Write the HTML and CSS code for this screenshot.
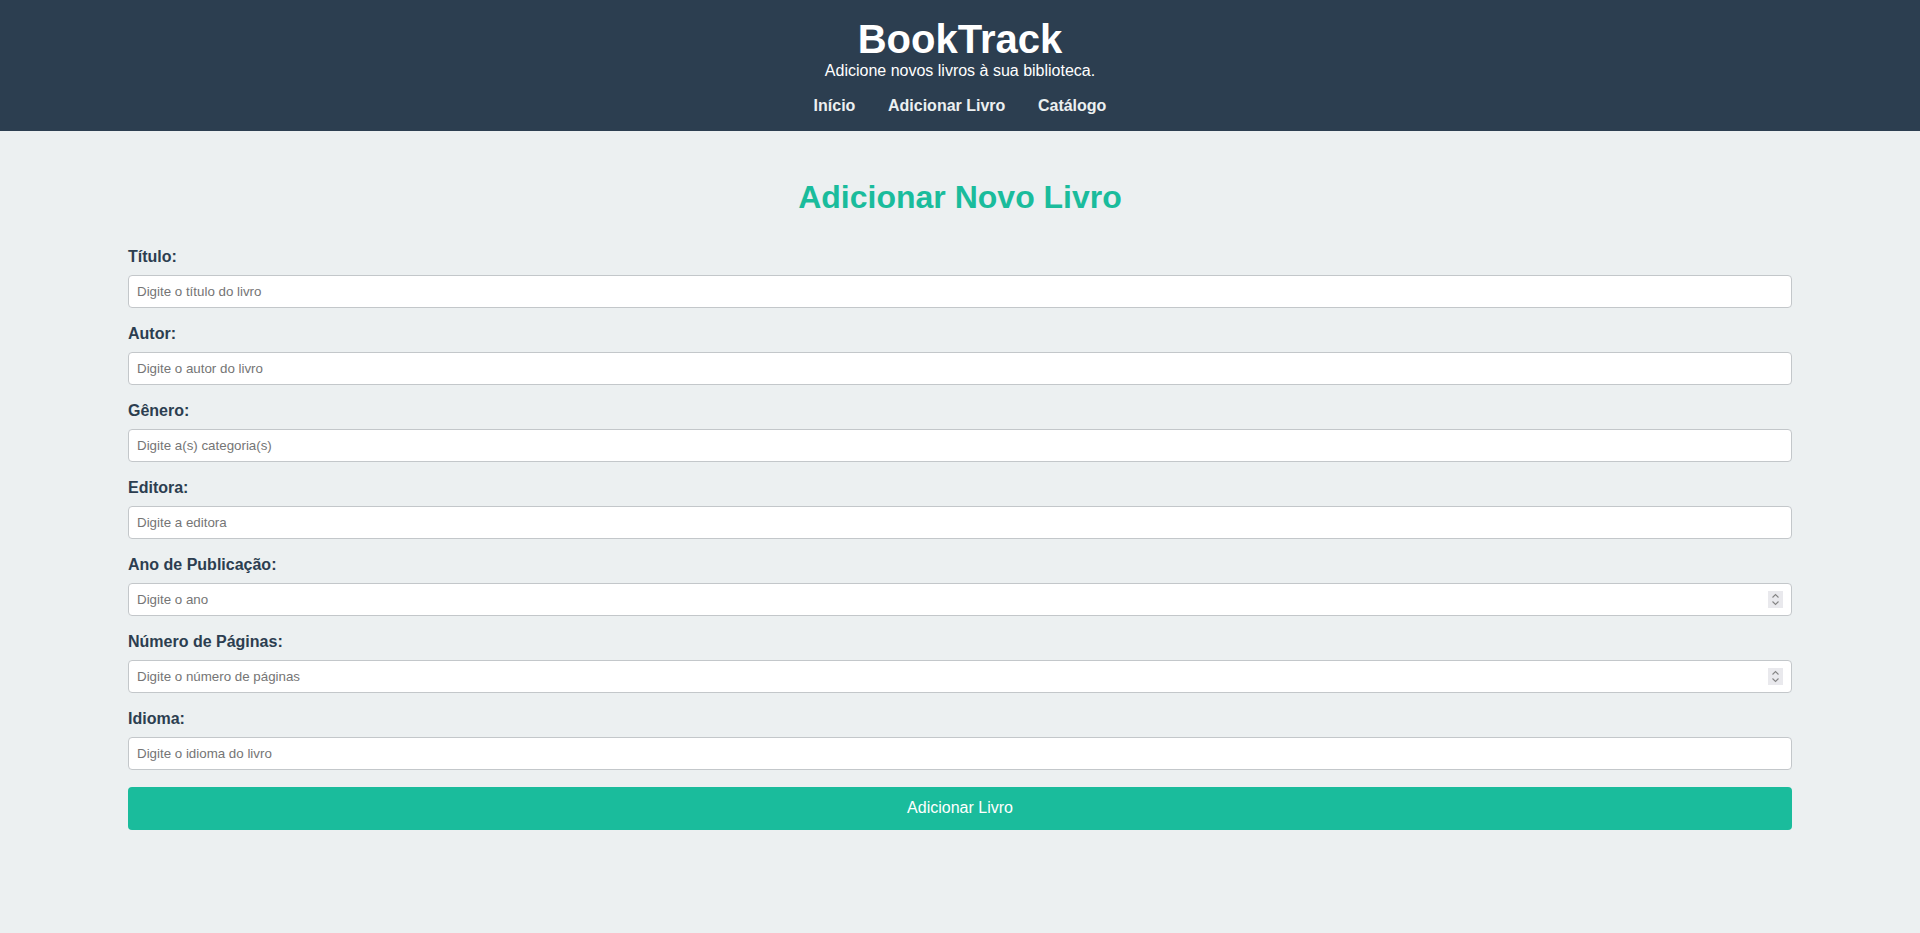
FILE: index.html
```html
<!DOCTYPE html>
<html lang="pt-BR">
<head>
<meta charset="utf-8">
<title>BookTrack - Adicionar Livro</title>
<link rel="stylesheet" href="styles.css">
</head>
<body>
<header class="site-header">
  <h1 class="brand">BookTrack</h1>
  <p class="tagline">Adicione novos livros à sua biblioteca.</p>
  <nav class="main-nav">
    <a href="#" class="nav-link">Início</a>
    <a href="#" class="nav-link">Adicionar Livro</a>
    <a href="#" class="nav-link">Catálogo</a>
  </nav>
</header>
<main class="content">
  <h2 class="page-title">Adicionar Novo Livro</h2>
  <form class="book-form">
    <div class="form-group">
      <label class="field-label" for="titulo">Título:</label>
      <input class="field-input" type="text" id="titulo" placeholder="Digite o título do livro">
    </div>
    <div class="form-group">
      <label class="field-label" for="autor">Autor:</label>
      <input class="field-input" type="text" id="autor" placeholder="Digite o autor do livro">
    </div>
    <div class="form-group">
      <label class="field-label" for="genero">Gênero:</label>
      <input class="field-input" type="text" id="genero" placeholder="Digite a(s) categoria(s)">
    </div>
    <div class="form-group">
      <label class="field-label" for="editora">Editora:</label>
      <input class="field-input" type="text" id="editora" placeholder="Digite a editora">
    </div>
    <div class="form-group">
      <label class="field-label" for="ano">Ano de Publicação:</label>
      <input class="field-input" type="number" id="ano" placeholder="Digite o ano">
    </div>
    <div class="form-group">
      <label class="field-label" for="paginas">Número de Páginas:</label>
      <input class="field-input" type="number" id="paginas" placeholder="Digite o número de páginas">
    </div>
    <div class="form-group">
      <label class="field-label" for="idioma">Idioma:</label>
      <input class="field-input" type="text" id="idioma" placeholder="Digite o idioma do livro">
    </div>
    <button class="submit-btn" type="submit">Adicionar Livro</button>
  </form>
</main>
</body>
</html>
```
FILE: styles.css
```css
html, body {
  margin: 0;
  padding: 0;
}
body {
  font-family: "Liberation Sans", Arial, sans-serif;
  background: #ecf0f1;
  color: #2c3e50;
}
.site-header {
  background: #2c3e50;
  color: #ffffff;
  text-align: center;
  padding: 16px 0 15px;
  height: 131px;
  box-sizing: border-box;
}
.brand {
  margin: 0;
  font-size: 40px;
  font-weight: bold;
  line-height: 46px;
}
.tagline {
  margin: 0;
  font-size: 16px;
  line-height: 18.4px;
}
.main-nav {
  margin-top: 16.6px;
  display: flex;
  justify-content: center;
  gap: 32.6px;
}
.nav-link {
  color: #ecf0f1;
  text-decoration: none;
  font-weight: bold;
  font-size: 16px;
  line-height: 18.4px;
}
.content {
  padding: 48px 128px 40px;
}
.page-title {
  margin: 0 0 32.7px;
  text-align: center;
  color: #1abc9c;
  font-size: 32px;
  line-height: 36.8px;
  font-weight: bold;
}
.book-form {
  display: flex;
  flex-direction: column;
}
.form-group {
  display: flex;
  flex-direction: column;
  margin-bottom: 17px;
}
.field-label {
  font-weight: bold;
  font-size: 16px;
  line-height: 18.4px;
  margin-bottom: 8.2px;
  color: #2c3e50;
}
.field-input {
  font-family: "Liberation Sans", Arial, sans-serif;
  font-size: 13.333px;
  padding: 8px;
  border: 1px solid #c3c7ca;
  border-radius: 4px;
  background: #ffffff;
  color: #2c3e50;
  width: 100%;
  box-sizing: border-box;
  height: 33.4px;
}
.field-input::placeholder {
  color: #757575;
}
.field-input::-webkit-outer-spin-button {
  -webkit-appearance: none;
  margin: 0;
}
.field-input::-webkit-inner-spin-button {
  -webkit-appearance: none;
  appearance: none;
  opacity: 1;
  display: block;
  width: 15px;
  height: 17px;
  margin: -1px 0;
  background: #e9e9ed url("data:image/svg+xml,%3Csvg xmlns='http://www.w3.org/2000/svg' width='15' height='17' viewBox='0 0 15 17'%3E%3Cpath d='M4.5 6.5 L7.5 3.5 L10.5 6.5 M4.5 10.5 L7.5 13.5 L10.5 10.5' fill='none' stroke='%23858585' stroke-width='1.1'/%3E%3C/svg%3E") no-repeat center;
}
.submit-btn {
  font-family: "Liberation Sans", Arial, sans-serif;
  font-size: 16px;
  background: #1abc9c;
  color: #ffffff;
  border: none;
  border-radius: 4px;
  padding: 12px;
  height: 43px;
  width: 100%;
  cursor: pointer;
  margin-top: -0.6px;
}
```
